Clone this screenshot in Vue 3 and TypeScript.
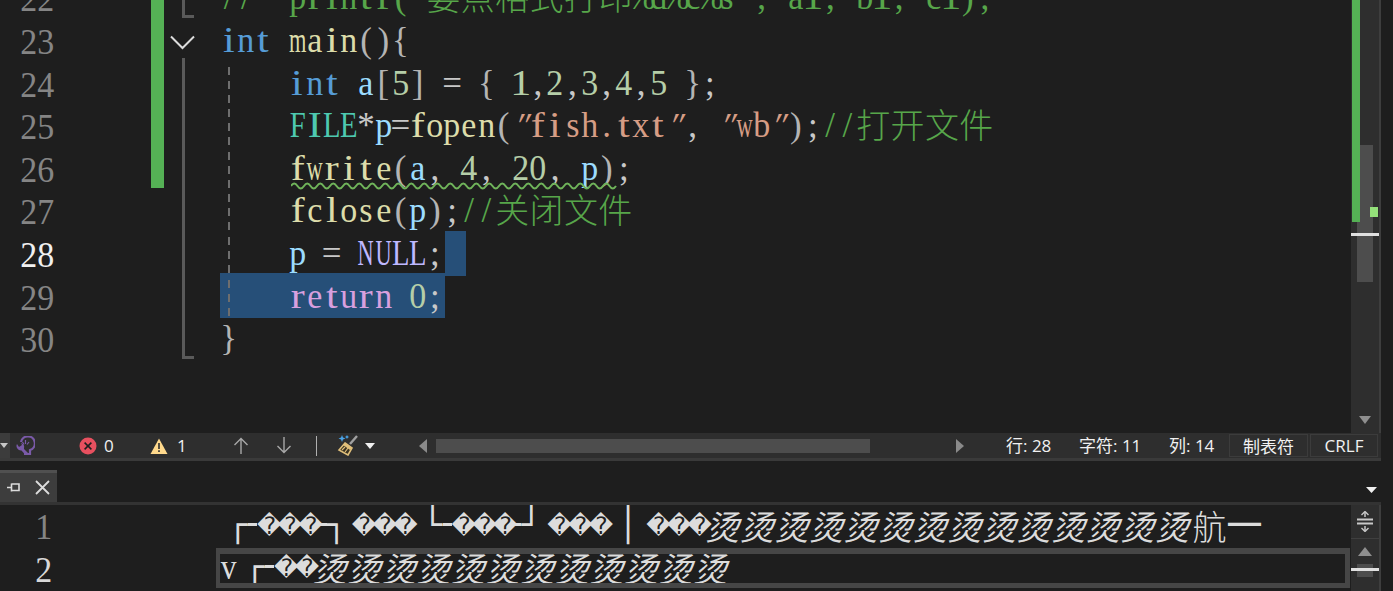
<script setup lang="ts">
type Tok = [string, string]
interface Cell { ch: string; cls: string }

const wideSet = 'mwMNUW'
const midSet = 'FLEXTRD'
const thinSet = 'iljtfrI1'

function cellClass(ch: string): string {
  if (/[\u3000-\u9fff]/.test(ch)) return 'cjk'
  if (ch === '"') return 'quote'
  if (wideSet.includes(ch)) return 'wide'
  if (midSet.includes(ch)) return 'mid'
  if (thinSet.includes(ch)) return 'thin'
  if (/[;:,.()[\]{}*/=]/.test(ch)) return 'punct'
  return 'norm'
}

function flat(toks: Tok[]): Cell[] {
  return toks.flatMap(([t, c]) => Array.from(t).map(ch => ({ ch: ch === ' ' ? '\u00a0' : ch, cls: `${cellClass(ch)} ${c}` })))
}

const rows = [
  { n: 22, fold: 'end', bar: true, guide: false, toks: [['//  printf("要点格式打印%d%c%s", a1, b1, c1);', 'cm']] as Tok[] },
  { n: 23, fold: 'open', bar: true, guide: false, toks: [['int', 'kw'], [' ', 'pn'], ['main', 'fn'], ['()', 'pr'], ['{', 'pr']] as Tok[] },
  { n: 24, fold: 'mid', bar: true, guide: true, toks: [['    ', 'pn'], ['int', 'kw'], [' ', 'pn'], ['a', 'vr'], ['[', 'pr'], ['5', 'nm'], [']', 'pr'], [' = ', 'pn'], ['{', 'pr'], [' ', 'pn'], ['1', 'nm'], [',', 'pn'], ['2', 'nm'], [',', 'pn'], ['3', 'nm'], [',', 'pn'], ['4', 'nm'], [',', 'pn'], ['5', 'nm'], [' ', 'pn'], ['}', 'pr'], [';', 'pn']] as Tok[] },
  { n: 25, fold: 'mid', bar: true, guide: true, toks: [['    ', 'pn'], ['FILE', 'ty'], ['*', 'pn'], ['p', 'vr'], ['=', 'pn'], ['fopen', 'fn'], ['(', 'pr'], ['"fish.txt"', 'st'], [', ', 'pn'], ['"wb"', 'st'], [')', 'pr'], [';', 'pn'], ['//打开文件', 'cm']] as Tok[] },
  { n: 26, fold: 'mid', bar: true, guide: true, squiggle: true, toks: [['    ', 'pn'], ['fwrite', 'fn'], ['(', 'pr'], ['a', 'vr'], [', ', 'pn'], ['4', 'nm'], [', ', 'pn'], ['20', 'nm'], [', ', 'pn'], ['p', 'vr'], [')', 'pr'], [';', 'pn']] as Tok[] },
  { n: 27, fold: 'mid', bar: false, guide: true, toks: [['    ', 'pn'], ['fclose', 'fn'], ['(', 'pr'], ['p', 'vr'], [')', 'pr'], [';', 'pn'], ['//关闭文件', 'cm']] as Tok[] },
  { n: 28, fold: 'mid', bar: false, guide: true, cur: true, sel: 'tail', toks: [['    ', 'pn'], ['p', 'vr'], [' = ', 'pn'], ['NULL', 'mc'], [';', 'pn']] as Tok[] },
  { n: 29, fold: 'mid', bar: false, guide: true, sel: 'full', toks: [['    ', 'pn'], ['return', 'rt'], [' ', 'pn'], ['0', 'nm'], [';', 'pn']] as Tok[] },
  { n: 30, fold: 'close', bar: false, guide: false, toks: [['}', 'pr']] as Tok[] },
].map(r => ({ ...r, cells: flat(r.toks) }))

const squiggle = (() => {
  let d = 'M0 4'
  for (let x = 0; x < 324; x += 13) d += ` Q${x + 3.25} -1 ${x + 6.5} 4 T${x + 13} 4`
  return d
})()

interface OutTok { ch: string; kind: string; w?: number }
const F = '\ufffd'
const tang = (n: number): OutTok[] => Array.from({ length: n }, () => ({ ch: '烫', kind: 'tang' }))
const fffd = (n: number): OutTok[] => Array.from({ length: n }, () => ({ ch: F, kind: 'rep' }))
const box = (ch: string, side: string): OutTok => ({ ch, kind: `box ${side}` })
const gap = (w: number): OutTok => ({ ch: '\u00a0', kind: 'gap', w })

const out1: OutTok[] = [
  gap(17), box('┌', 'lft dn'), ...fffd(3), box('┐', 'rgt dn'), gap(13), ...fffd(3), gap(18), box('└', 'lft up'), ...fffd(3), box('┘', 'rgt up'), gap(14),
  ...fffd(3), gap(9), box('│', 'mid'), gap(8), ...fffd(3), ...tang(14), { ch: '航', kind: 'hang' }, { ch: '—', kind: 'dash' },
]
const out2: OutTok[] = [
  { ch: 'v', kind: 'lat' }, gap(17), box('┌', 'lft dn'), ...fffd(2), ...tang(12),
]
</script>

<template>
  <div class="app">
    <section class="editor">
      <div class="code-view">
        <div class="rows">
          <div v-for="r in rows" :key="r.n" class="row">
            <div class="num" :class="{ cur: r.cur }">
              <span v-for="d in String(r.n)" :key="d" class="ch norm"><span class="g">{{ d }}</span></span>
            </div>
            <div class="bar" :class="{ on: r.bar }"></div>
            <div class="fold" :class="r.fold">
              <svg v-if="r.fold === 'open'" class="chev" width="26" height="16" viewBox="0 0 26 16">
                <path d="M1 1.5 L12.5 13 L24 1.5" fill="none" stroke="#dcdcdc" stroke-width="2" />
              </svg>
            </div>
            <div class="code" :class="{ guide: r.guide }">
              <div v-if="r.sel" class="sel" :class="r.sel"></div>
              <div class="line">
                <span v-for="(c, i) in r.cells" :key="i" class="ch" :class="c.cls"><span class="g">{{ c.ch }}</span></span>
              </div>
              <svg v-if="r.squiggle" class="squig" width="326" height="8" viewBox="0 0 326 8">
                <path :d="squiggle" fill="none" stroke="#6fb35a" stroke-width="2" />
              </svg>
            </div>
          </div>
        </div>
      </div>
      <div class="vscroll">
        <div class="vthumb"></div>
        <div class="vgreen"></div>
        <div class="vmark"></div>
        <div class="vcaret"></div>
        <svg class="vdown" width="14" height="10" viewBox="0 0 14 10"><path d="M1 1 H13 L7 9 Z" fill="#8f8f8f" /></svg>
      </div>
    </section>

    <footer class="status">
      <div class="cap">
        <svg width="8" height="5" viewBox="0 0 8 5"><path d="M0 0 H8 L4 5 Z" fill="#c8c8c8" /></svg>
      </div>
      <svg class="i-bulb" width="19" height="20" viewBox="0 0 19 20">
        <path d="M5 6 A7 7 0 1 1 14 14 V18 H8" fill="none" stroke="#7a5aa8" stroke-width="2.2" />
        <path d="M9.5 4 V8 M6.5 6 L8 8.5 M13 6 L11 8.5" stroke="#7a5aa8" stroke-width="1.2" fill="none" />
        <path d="M1 8 L3 11 L6 9 L5 7 A4 4 0 0 1 8 12 L8 13 L12 17 L9.5 19 L5.5 14.5 A4.5 4.5 0 0 1 1 8 Z" fill="#7a5aa8" />
      </svg>
      <svg class="i-err" width="18" height="18" viewBox="0 0 18 18">
        <circle cx="9" cy="9" r="8.5" fill="#e8505f" />
        <path d="M5.6 5.6 L12.4 12.4 M12.4 5.6 L5.6 12.4" stroke="#1e1e1e" stroke-width="1.5" />
      </svg>
      <span class="count zero">0</span>
      <svg class="i-warn" width="18" height="16" viewBox="0 0 18 16">
        <path d="M9 0.5 L17.5 16 H0.5 Z" fill="#ffd98c" />
        <path d="M8.2 5 H9.8 V11 H8.2 Z M8.2 12.2 H9.8 V14 H8.2 Z" fill="#2d2d2d" />
      </svg>
      <span class="count one">1</span>
      <svg class="i-up" width="16" height="17" viewBox="0 0 16 17"><path d="M8 17 V2 M1.5 8 L8 1.5 L14.5 8" fill="none" stroke="#a8a8a8" stroke-width="1.4" /></svg>
      <svg class="i-down" width="16" height="17" viewBox="0 0 16 17"><path d="M8 0 V15 M1.5 9 L8 15.5 L14.5 9" fill="none" stroke="#a8a8a8" stroke-width="1.4" /></svg>
      <div class="divider"></div>
      <svg class="i-broom" width="22" height="21" viewBox="0 0 22 21">
        <path d="M13 9 L20 1" stroke="#a0a0a0" stroke-width="2.4" fill="none" />
        <path d="M8 8 L15 13 L11 20 L2 15 Z" fill="#3a3322" stroke="#e0bf7a" stroke-width="1.6" />
        <path d="M8 8 L15 13 L13 15 L6 10 Z" fill="#e0bf7a" />
        <path d="M5 15 L8 12 M8 17 L11 13" stroke="#e0bf7a" stroke-width="1.2" />
        <path d="M5 0 L6 2.5 L8.5 3.5 L6 4.5 L5 7 L4 4.5 L1.5 3.5 L4 2.5 Z M10 0 L10.7 1.3 L12 2 L10.7 2.7 L10 4 L9.3 2.7 L8 2 L9.3 1.3 Z" fill="#4aa3e8" />
      </svg>
      <svg class="i-caret" width="10" height="6" viewBox="0 0 10 6"><path d="M0 0 H10 L5 6 Z" fill="#f0f0f0" /></svg>
      <svg class="i-left" width="9" height="14" viewBox="0 0 9 14"><path d="M9 0 V14 L1 7 Z" fill="#8a8a8a" /></svg>
      <div class="hthumb"></div>
      <svg class="i-right" width="9" height="14" viewBox="0 0 9 14"><path d="M0 0 V14 L8 7 Z" fill="#8a8a8a" /></svg>
      <span class="pos p-line">行: 28</span>
      <span class="pos p-char">字符: 11</span>
      <span class="pos p-col">列: 14</span>
      <span class="btn b-tab">制表符</span>
      <span class="btn b-crlf">CRLF</span>
    </footer>

    <div class="tabstrip">
      <div class="tab">
        <svg width="13" height="13" viewBox="0 0 13 13">
          <path d="M0 6.5 H4 M4.5 2.5 V10.5 M4.5 3 H12 V9.5 H4.5" fill="none" stroke="#dcdcdc" stroke-width="1.6" />
        </svg>
        <svg width="15" height="15" viewBox="0 0 15 15">
          <path d="M1 1 L14 14 M14 1 L1 14" stroke="#dcdcdc" stroke-width="1.8" />
        </svg>
      </div>
      <svg class="strip-caret" width="11" height="6" viewBox="0 0 11 6"><path d="M0 0 H11 L5.5 6 Z" fill="#f0f0f0" /></svg>
    </div>

    <section class="output">
      <div class="out-view">
        <div class="out-row">
          <div class="out-num dim"><span class="ch norm"><span class="g">1</span></span></div>
          <div class="out-line">
            <span v-for="(t, i) in out1" :key="i" class="o" :class="t.kind" :style="t.w ? { width: t.w + 'px' } : undefined">{{ t.ch }}</span>
          </div>
        </div>
        <div class="out-row">
          <div class="out-num"><span class="ch norm"><span class="g">2</span></span></div>
          <div class="out-line active">
            <span v-for="(t, i) in out2" :key="i" class="o" :class="t.kind" :style="t.w ? { width: t.w + 'px' } : undefined">{{ t.ch }}</span>
          </div>
        </div>
      </div>
      <div class="oscroll">
        <div class="split">
          <svg width="16" height="21" viewBox="0 0 16 21">
            <path d="M0 8.5 H16 M0 12.5 H16" stroke="#c8c8c8" stroke-width="2" />
            <path d="M8 1 V6 M8 15 V20" stroke="#c8c8c8" stroke-width="1.5" />
            <path d="M4.5 4 L8 0.5 L11.5 4 M4.5 17 L8 20.5 L11.5 17" fill="none" stroke="#c8c8c8" stroke-width="1.4" />
          </svg>
        </div>
        <svg class="oup" width="14" height="9" viewBox="0 0 14 9"><path d="M0 9 H14 L7 0 Z" fill="#8f8f8f" /></svg>
        <div class="othumb"></div>
        <div class="ocaret"></div>
      </div>
    </section>
  </div>
</template>

<style>
html, body { margin: 0; background: #1e1e1e; }
</style>

<style scoped>
.app {
  width: 1393px;
  height: 591px;
  background: #1e1e1e;
  overflow: hidden;
  display: flex;
  flex-direction: column;
  font-family: "Liberation Serif", "Noto Sans CJK SC", serif;
}
.editor { height: 433px; display: flex; flex: none; }
.code-view { width: 1351px; height: 433px; overflow: hidden; flex: none; }
.rows { margin-top: -24.6px; }
.row { height: 42.6px; display: flex; }

.ch {
  display: inline-flex;
  justify-content: center;
  width: 17.2px;
  flex: none;
  font-size: 35px;
  line-height: 42.6px;
  height: 42.6px;
}
.g { display: inline-block; white-space: pre; }
.ch.wide .g { transform: scaleX(.64); }
.ch.mid .g { transform: scaleX(.82); }
.ch.norm .g { transform: scaleX(.97); }
.ch.thin .g { transform: scaleX(1.2); }
.ch.quote .g { transform: skewX(-24deg); }
.ch.cjk {
  width: 34.4px;
  font-size: 34px;
  font-family: "Noto Sans CJK SC", sans-serif;
  font-weight: 300;
}
.ch.cjk .g { transform: translateY(-2px); }

.num {
  width: 151px;
  box-sizing: border-box;
  padding: 4px 0 0 20px;
  display: flex;
  flex: none;
  color: #858585;
}
.num.cur { color: #f0f0f0; }
.bar { width: 13px; flex: none; }
.bar.on { background: #55b155; }
.fold { width: 56px; flex: none; position: relative; }
.fold.mid::before,
.fold.end::before,
.fold.close::before {
  content: "";
  position: absolute;
  left: 18px;
  top: 0;
  bottom: 0;
  width: 3px;
  background: #5a5a5a;
}
.fold.end::after,
.fold.close::after {
  content: "";
  position: absolute;
  left: 18px;
  bottom: 0;
  width: 12px;
  height: 3px;
  background: #5a5a5a;
}
.fold.open::before {
  content: "";
  position: absolute;
  left: 18px;
  bottom: 0;
  height: 3px;
  width: 3px;
  background: #5a5a5a;
}
.chev { position: absolute; left: 6px; top: 17px; }
.code { flex: 1; position: relative; }
.guide::before {
  content: "";
  position: absolute;
  z-index: 2;
  left: 8px;
  top: 0;
  bottom: 0;
  width: 2px;
  background: repeating-linear-gradient(transparent 0 6px, #6e6e6e 6px 14px, transparent 14px 14.2px);
}
.line { display: flex; position: relative; z-index: 1; padding-top: 2px; }
.sel { position: absolute; background: #264f78; height: 45px; z-index: 0; }
.sel.tail { left: 225px; width: 21px; top: 0; }
.sel.full { left: 0; width: 225px; top: -1px; }
.squig { position: absolute; z-index: 2; left: 71px; top: 36px; }

.kw { color: #569cd6; }
.fn { color: #dcdcaa; }
.pr { color: #b4b4b4; }
.pn { color: #c8c8c8; }
.vr { color: #9cdcfe; }
.nm { color: #b5cea8; }
.ty { color: #4ec9b0; }
.st { color: #d69d85; }
.cm { color: #57a64a; }
.mc { color: #beb7ff; }
.rt { color: #d8a0df; }

.vscroll {
  width: 28px;
  background: #2e2e2e;
  border-right: 2px solid #3e3e3e;
  flex: none;
  position: relative;
}
.vthumb { position: absolute; left: 6px; top: 145px; width: 16px; height: 137px; background: #4d4d4d; }
.vgreen { position: absolute; left: 1px; top: 0; width: 8px; height: 222px; background: #55b155; }
.vmark { position: absolute; left: 19px; top: 207px; width: 8px; height: 10px; background: #94e07a; }
.vcaret { position: absolute; left: 0; top: 233px; width: 28px; height: 3px; background: #e0e0e0; }
.vdown { position: absolute; left: 7px; top: 415px; }

.status {
  width: 1381px;
  height: 25px;
  flex: none;
  background: #2e2e2e;
  border-bottom: 3px solid #3a3a3a;
  display: flex;
  align-items: center;
  font-family: "Open Sans", "Noto Sans CJK SC", sans-serif;
  font-size: 17px;
  color: #f1f1f1;
}
.cap {
  width: 10px;
  height: 25px;
  background: #3c3c3c;
  display: flex;
  align-items: center;
  flex: none;
}
.i-bulb { margin-left: 6px; flex: none; }
.i-err { margin-left: 44px; flex: none; }
.count { line-height: 25px; flex: none; }
.zero { margin-left: 7px; width: 10px; }
.i-warn { margin-left: 36px; flex: none; }
.one { margin-left: 9px; width: 10px; }
.i-up { margin-left: 46px; flex: none; }
.i-down { margin-left: 27px; flex: none; }
.divider { width: 1px; height: 20px; background: #b0b0b0; margin-left: 24px; flex: none; }
.i-broom { margin-left: 20px; flex: none; }
.i-caret { margin-left: 6px; flex: none; }
.i-left { margin-left: 43px; flex: none; }
.hthumb { width: 434px; height: 14px; background: #4d4d4d; margin-left: 9px; flex: none; }
.i-right { margin-left: 86px; flex: none; }
.pos { flex: none; line-height: 25px; white-space: nowrap; }
.p-line { margin-left: 41px; width: 46px; }
.p-char { margin-left: 27px; width: 62px; }
.p-col { margin-left: 28px; width: 46px; }
.btn {
  flex: none;
  height: 23px;
  box-sizing: border-box;
  border: 1px solid #3c3c3c;
  display: flex;
  align-items: center;
  justify-content: center;
  background: #2e2e2e;
}
.b-tab { margin-left: 14px; width: 79px; }
.b-crlf { margin-left: 2px; width: 68px; }

.tabstrip {
  height: 32px;
  flex: none;
  padding-top: 9px;
  width: 1381px;
  border-bottom: 3px solid #333;
  display: flex;
  justify-content: space-between;
  align-items: flex-start;
}
.tab {
  width: 57px;
  height: 32px;
  box-sizing: border-box;
  background: #3d3d3d;
  border-top: 3px solid #505050;
  display: flex;
  align-items: center;
  padding-left: 7px;
  gap: 15px;
}
.strip-caret { margin: 17px 4px 0 0; }

.output { flex: 1; display: flex; min-height: 0; }
.out-view { width: 1351px; flex: none; }
.out-row { height: 42.6px; display: flex; }
.out-num { width: 216px; flex: none; box-sizing: border-box; padding: 2px 0 0 35px; display: flex; color: #d8d8d8; }
.out-num.dim { color: #858585; }
.out-line {
  width: 1134px;
  box-sizing: border-box;
  padding-left: 4px;
  display: flex;
  align-items: center;
  height: 42px;
  color: #dcdcdc;
  overflow: hidden;
}
.out-line.active {
  border: 5px solid #464646;
  border-top-width: 6px;
  border-left-width: 4px;
  padding-left: 0;
  height: 40px;
}
.o { flex: none; display: inline-block; text-align: center; }
.o.gap { font-size: 10px; }
.o.box {
  width: 20px;
  font-family: "DejaVu Sans Mono", monospace;
  font-size: 33px;
  line-height: 38px;
  height: 38px;
  position: relative;
  margin-top: -2px;
}
.o.box.lft { transform: translateX(-9px); }
.o.box.rgt { transform: translateX(8px); }
.o.box.lft::after,
.o.box.rgt::after {
  content: "";
  position: absolute;
  top: 17px;
  width: 9px;
  height: 3px;
  background: #dcdcdc;
}
.o.box.lft::after { left: 20px; }
.o.box.rgt::after { right: 20px; }
.o.rep {
  width: 20.6px;
  font-family: "DejaVu Sans", sans-serif;
  font-size: 24px;
  line-height: 30px;
}
.o.tang {
  width: 34.6px;
  font-family: "Noto Sans CJK SC", sans-serif;
  font-size: 34px;
  line-height: 40px;
  font-style: italic;
  font-weight: 400;
  transform: translateX(-3px);
}
.o.hang {
  width: 34.4px;
  font-family: "Noto Sans CJK SC", sans-serif;
  font-size: 34px;
  line-height: 40px;
  font-weight: 300;
}
.o.dash {
  width: 35px;
  font-family: "Noto Sans CJK SC", sans-serif;
  font-size: 34px;
  line-height: 40px;
  font-weight: 700;
  transform: translateY(-6px) scaleX(1.2);
}
.o.lat { width: 17px; font-size: 35px; line-height: 30px; transform: scaleX(.9); }

.oscroll {
  width: 28px;
  background: #2e2e2e;
  border-right: 2px solid #3e3e3e;
  flex: none;
  position: relative;
}
.split {
  height: 33px;
  border-bottom: 1px solid #3f3f3f;
  display: flex;
  align-items: center;
  justify-content: center;
}
.oup { position: absolute; left: 7px; top: 42px; }
.othumb { position: absolute; left: 6px; top: 59px; width: 16px; height: 13px; background: #4d4d4d; }
.ocaret { position: absolute; left: 0; top: 63px; width: 28px; height: 3px; background: #e0e0e0; }
</style>
